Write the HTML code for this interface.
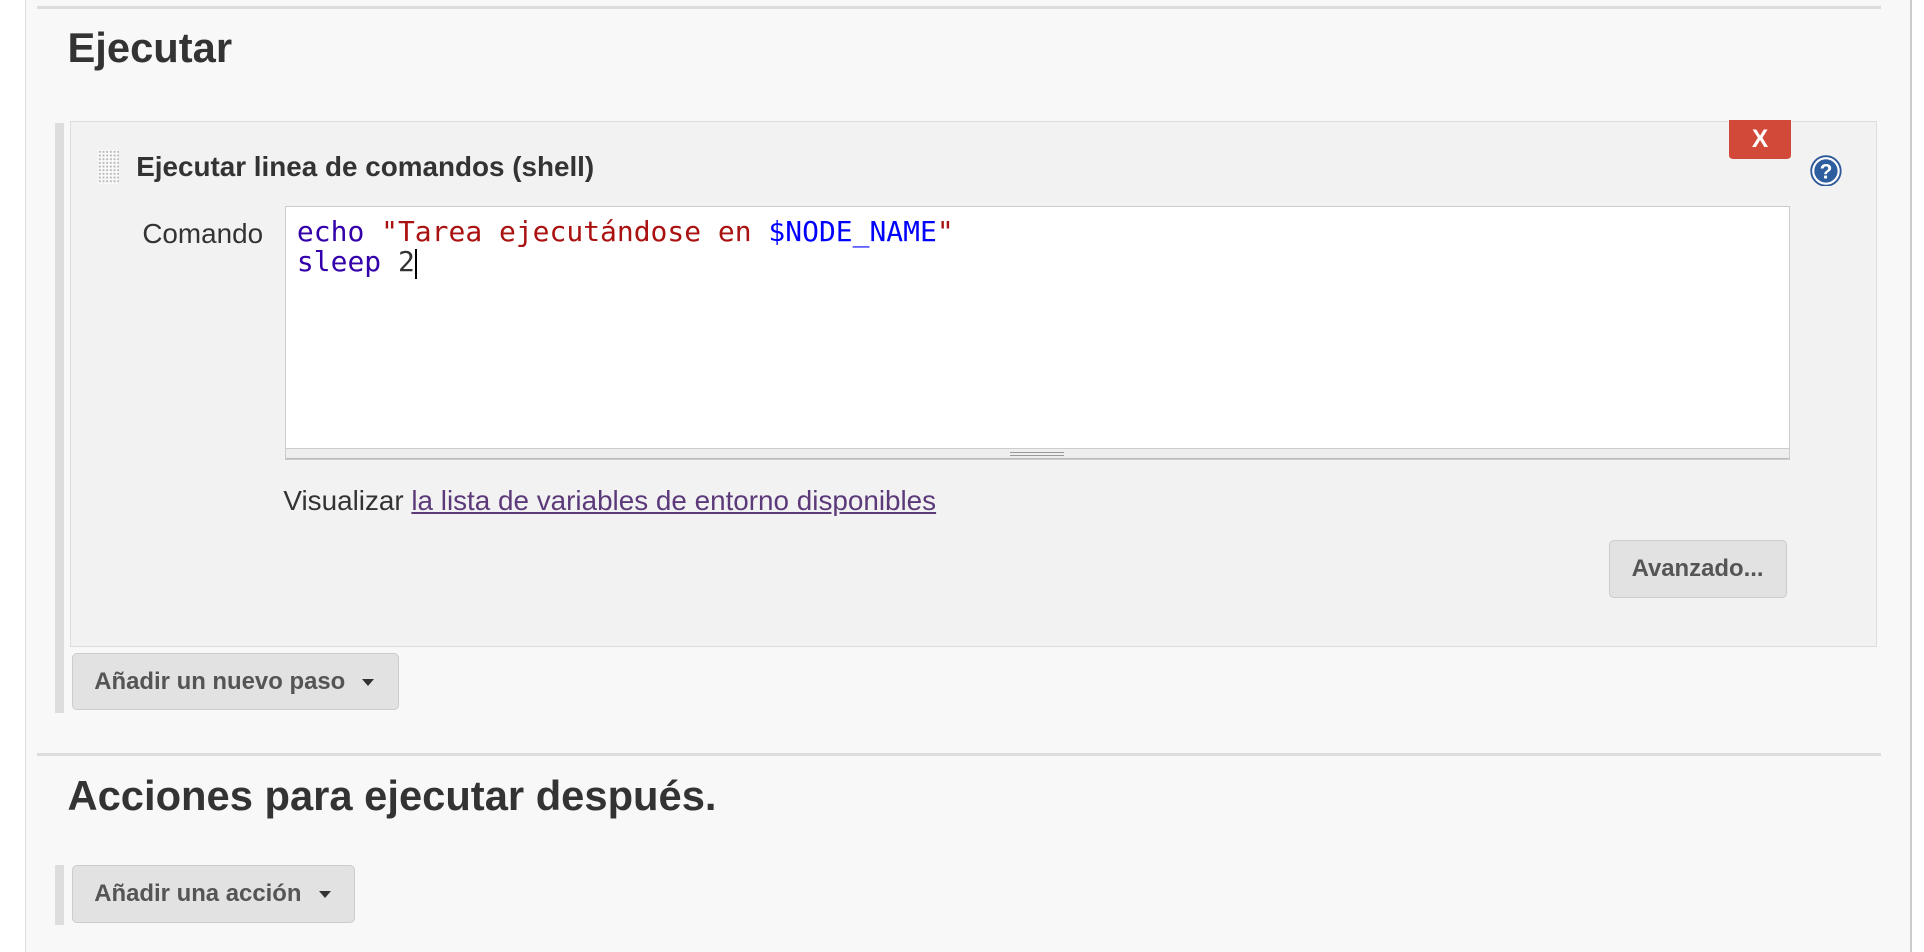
<!DOCTYPE html>
<html><head><meta charset="utf-8"><style>
html,body{margin:0;padding:0;width:1924px;height:952px;overflow:hidden;background:#fff}
#w{zoom:1.2270;position:relative;width:1568px;height:776px;background:#f8f8f8;font-family:"Liberation Sans",sans-serif;color:#333}
.a{position:absolute}
.h{font-weight:bold;font-size:34px;color:#333;white-space:nowrap}
.btn{position:absolute;background:#e2e2e2;border:1px solid #ccc;border-radius:4px;box-sizing:border-box;font-weight:bold;font-size:19.5px;color:#555;white-space:nowrap}
.car{display:inline-block;width:0;height:0;border-left:5px solid transparent;border-right:5px solid transparent;border-top:6px solid #333;vertical-align:middle;margin-left:14px}
.mono{font-family:"DejaVu Sans Mono",monospace;font-size:22.8px;line-height:24px;white-space:pre}
</style></head><body><div id="w">
<div class="a" style="left:0;top:0;width:20px;height:776px;background:#fff;border-right:1px solid #ddd"></div>
<div class="a" style="left:1557px;top:0;width:11px;height:776px;background:#fff;border-left:2px solid #ccc"></div>
<div class="a" style="left:30px;top:5px;width:1503px;height:2px;background:#ddd"></div>
<div class="a h" style="left:55px;top:19px;line-height:40px">Ejecutar</div>

<div class="a" style="left:45px;top:100px;width:7px;height:481px;background:#ddd"></div>
<div class="a" style="left:57px;top:99px;width:1473px;height:428px;background:#f2f2f2;border:1px solid #ddd;box-sizing:border-box"></div>
<div class="a" style="left:80px;top:122px;width:17px;height:28px;background-image:radial-gradient(#bbb 0.8px,transparent 1px);background-size:3px 3px;background-color:#fafafa"></div>
<div class="a" style="left:111px;top:122px;font-weight:bold;font-size:22.7px;white-space:nowrap;line-height:28px">Ejecutar linea de comandos (shell)</div>
<div class="a" style="left:1409px;top:98px;width:51px;height:32px;background:#d24939;border-radius:0 0 3px 3px;color:#fff;font-weight:bold;font-size:20px;text-align:center;line-height:32px">X</div>
<svg class="a" style="left:1475px;top:126px" width="26" height="26" viewBox="0 0 26 26"><circle cx="13" cy="13" r="12" fill="#fff" stroke="#2b5797" stroke-width="1.5"/><circle cx="13" cy="13" r="9.5" fill="#2f5e9e"/><text x="13" y="19" text-anchor="middle" font-family="Liberation Sans" font-weight="bold" font-size="17" fill="#fff">?</text></svg>
<div class="a" style="left:116px;top:178px;font-size:22.7px;white-space:nowrap">Comando</div>
<div class="a" style="left:232px;top:168px;width:1227px;height:207px;background:#fff;border:1px solid #ccc;box-sizing:border-box"></div>
<div class="a" style="left:233px;top:365px;width:1225px;height:9px;background:#eee;border-top:1px solid #ccc;border-bottom:1px solid #bbb;box-sizing:border-box"></div>
<div class="a" style="left:823px;top:368px;width:44px;height:1px;background:#999"></div>
<div class="a" style="left:823px;top:371px;width:44px;height:1px;background:#999"></div>
<div class="a mono" style="left:242px;top:177px"><span style="color:#30a">echo</span> <span style="color:#a11">"Tarea ejecutándose en </span><span style="color:#00f">$NODE_NAME</span><span style="color:#a11">"</span>
<span style="color:#30a">sleep</span> <span style="color:#333">2</span></div>
<div class="a" style="left:338px;top:203px;width:1.5px;height:24px;background:#000"></div>
<div class="a" style="left:231px;top:395px;font-size:22.7px;white-space:nowrap">Visualizar <span style="color:#5c3a7a;text-decoration:underline">la lista de variables de entorno disponibles</span></div>
<div class="btn" style="left:1311px;top:440px;width:145px;height:47px;line-height:45px;text-align:center">Avanzado...</div>
<div class="btn" style="left:59px;top:532px;width:266px;height:47px;line-height:45px;padding-left:17px">Añadir un nuevo paso<span class="car"></span></div>

<div class="a" style="left:30px;top:614px;width:1503px;height:2px;background:#ddd"></div>
<div class="a h" style="left:55px;top:628px;line-height:40px">Acciones para ejecutar después.</div>
<div class="a" style="left:45px;top:705px;width:7px;height:49px;background:#ddd"></div>
<div class="btn" style="left:59px;top:705px;width:230px;height:47px;line-height:45px;padding-left:17px">Añadir una acción<span class="car"></span></div>
</div></body></html>
